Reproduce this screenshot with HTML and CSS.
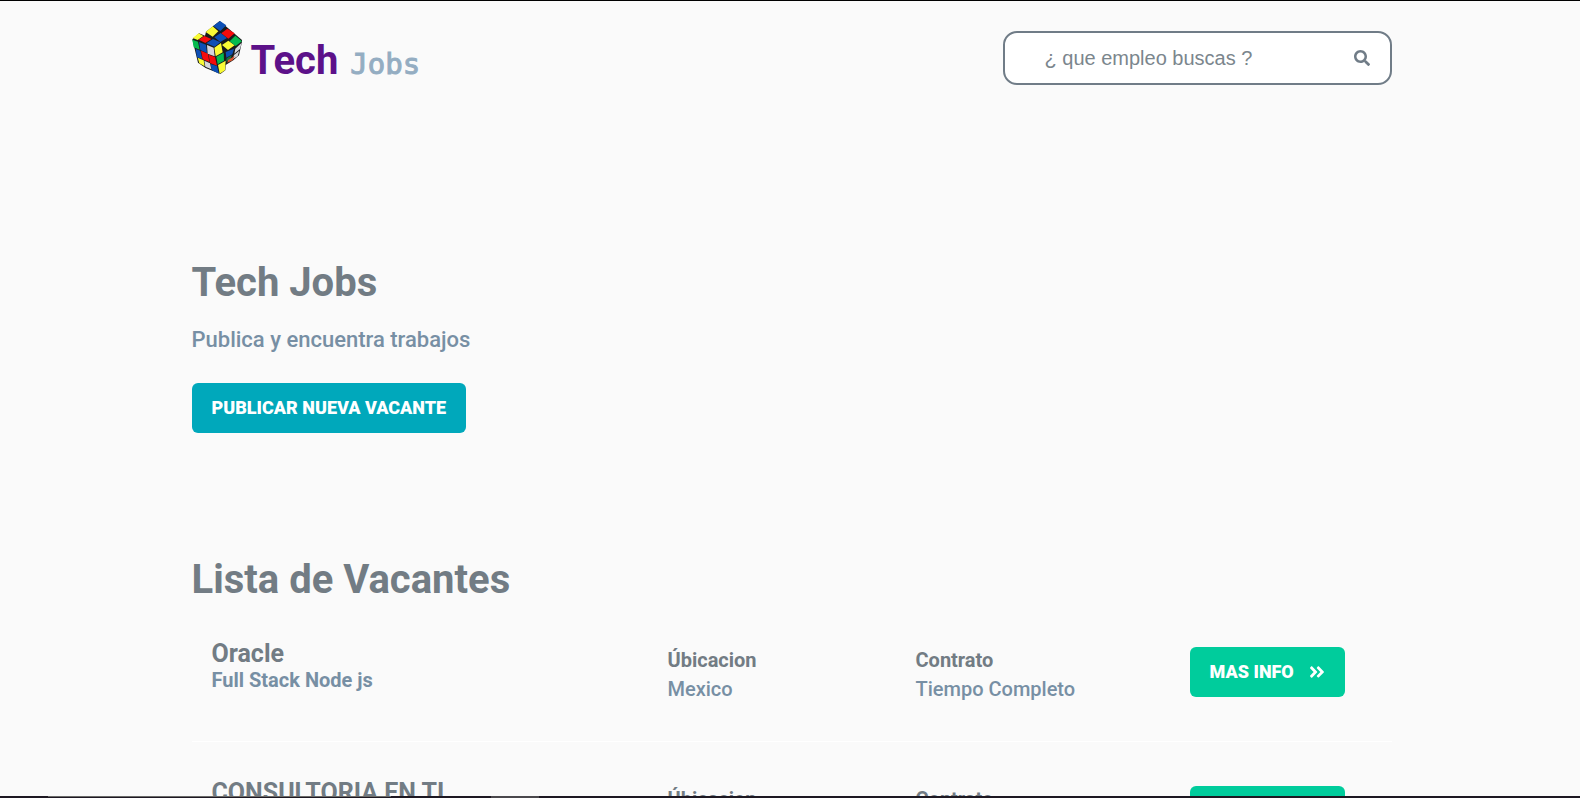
FILE: index.html
```html
<!DOCTYPE html>
<html lang="es">
<head>
<meta charset="utf-8">
<meta name="viewport" content="width=device-width, initial-scale=1">
<title>Tech Jobs</title>
<link rel="stylesheet" href="styles.css">
</head>
<body>
<header class="header container">
  <a class="logo" href="#">
    <svg class="logo-cube" viewBox="36 33 150 159" aria-hidden="true">
      <path fill="#191b1c" d="M119 33L187 91L177 136L160 151L137 165L136 181L121 192L77 174L54 158L37 88L57 70L75 77L78 65Z"/>
      <path fill="#0d4fb5" d="M120 33L139 46L121 63L100 48ZM122 69L141 84L121 96L103 82ZM79 100L99 87L121 97L104 110ZM57 96L78 104L81 129L61 120ZM47 117L61 122L67 147L51 142ZM92 162L111 168L117 191L95 180ZM137 126L162 116L157 133L139 143Z"/>
      <path fill="#f9fb35" d="M98 49L115 64L98 80L77 66ZM145 92L164 106L144 120L126 105ZM38 84L56 70L70 78L53 90ZM103 113L123 99L128 127L107 139ZM114 165L137 152L135 181L119 191ZM53 143L71 151L74 169L58 160Z"/>
      <path fill="#f50b0c" d="M142 56L164 70L145 86L124 70ZM56 89L73 78L94 87L76 99ZM63 122L84 131L88 156L68 148ZM86 134L105 141L111 167L90 159Z"/>
      <path fill="#05bb4e" d="M166 77L186 94L167 108L149 94ZM37 89L54 95L59 119L41 112ZM109 140L131 128L132 152L113 163Z"/>
      <path fill="#d5d6dc" d="M81 105L101 113L104 139L83 131ZM73 152L90 160L94 178L76 170ZM166 116L185 98L180 117L163 131ZM162 135L178 122L173 139L158 148Z"/>
      <path fill="#167344" d="M140 145L155 136L152 146L138 155Z"/>
      <path fill="#dc542e" d="M144 150L164 138L158 151L142 158Z"/>
    </svg>
    <span class="logo-name">Tech</span>
    <span class="logo-sub">Jobs</span>
  </a>
  <form class="search" role="search">
    <input class="search-input" type="text" placeholder="¿ que empleo buscas ?" aria-label="¿ que empleo buscas ?">
    <button class="search-button" type="button" aria-label="Buscar">
      <svg class="icon" viewBox="0 0 512 512" aria-hidden="true"><path fill="currentColor" d="M505 442.700L405.300 343c-4.500-4.500-10.600-7-17-7H372c27.600-35.300 44-79.700 44-128C416 93.100 322.900 0 208 0S0 93.100 0 208s93.100 208 208 208c48.300 0 92.700-16.400 128-44v16.300c0 6.400 2.500 12.500 7 17l99.700 99.700c9.400 9.400 24.600 9.400 33.900 0l28.300-28.300c9.400-9.400 9.400-24.600.1-34zM208 336c-70.700 0-128-57.200-128-128 0-70.700 57.200-128 128-128 70.700 0 128 57.200 128 128 0 70.700-57.200 128-128 128z"/></svg>
    </button>
  </form>
</header>
<main class="container">
  <section class="hero">
    <h1 class="title">Tech Jobs</h1>
    <p class="tagline">Publica y encuentra trabajos</p>
    <a class="button button-blue" href="#">Publicar nueva vacante</a>
  </section>
  <section>
    <h2 class="title">Lista de Vacantes</h2>
    <ul class="jobs">
      <li class="job">
        <div>
          <h3 class="company">Oracle</h3>
          <p class="position">Full Stack Node js</p>
        </div>
        <div class="detail">
          <p class="label">Úbicacion</p>
          <p class="value">Mexico</p>
        </div>
        <div class="detail">
          <p class="label">Contrato</p>
          <p class="value">Tiempo Completo</p>
        </div>
        <a class="button button-green" href="#">Mas info
          <svg class="icon icon-more" viewBox="0 0 448 512" aria-hidden="true"><path fill="currentColor" d="M224.300 273l-136 136c-9.400 9.400-24.600 9.400-33.900 0l-22.600-22.600c-9.400-9.400-9.400-24.600 0-33.900l96.400-96.400-96.400-96.400c-9.400-9.400-9.400-24.600 0-33.900L54.300 103c9.400-9.400 24.600-9.400 33.900 0l136 136c9.500 9.400 9.500 24.600.1 34zm192-34l-136-136c-9.400-9.400-24.600-9.400-33.900 0l-22.600 22.600c-9.400 9.400-9.400 24.600 0 33.900l96.400 96.400-96.400 96.400c-9.400 9.400-9.400 24.600 0 33.900l22.600 22.600c9.400 9.400 24.600 9.400 33.900 0l136-136c9.400-9.200 9.400-24.400 0-33.800z"/></svg>
        </a>
      </li>
      <li class="job">
        <div>
          <h3 class="company">CONSULTORIA EN TI</h3>
          <p class="position">Full Stack Node js</p>
        </div>
        <div class="detail">
          <p class="label">Úbicacion</p>
          <p class="value">Mexico</p>
        </div>
        <div class="detail">
          <p class="label">Contrato</p>
          <p class="value">Tiempo Completo</p>
        </div>
        <a class="button button-green" href="#">Mas info
          <svg class="icon icon-more" viewBox="0 0 448 512" aria-hidden="true"><path fill="currentColor" d="M224.300 273l-136 136c-9.400 9.400-24.600 9.400-33.900 0l-22.600-22.600c-9.400-9.400-9.400-24.600 0-33.900l96.400-96.400-96.400-96.400c-9.400-9.400-9.400-24.600 0-33.900L54.300 103c9.400-9.400 24.600-9.400 33.900 0l136 136c9.500 9.400 9.500 24.600.1 34zm192-34l-136-136c-9.400-9.400-24.600-9.400-33.900 0l-22.600 22.600c-9.400 9.400-9.400 24.600 0 33.900l96.400 96.400-96.400 96.400c-9.400 9.400-9.400 24.600 0 33.900l22.600 22.600c9.400 9.400 24.600 9.400 33.900 0l136-136c9.400-9.200 9.400-24.400 0-33.800z"/></svg>
        </a>
      </li>
    </ul>
  </section>
</main>
<div class="bottom-edge" aria-hidden="true"></div>
</body>
</html>
```
FILE: styles.css
```css
* {
  box-sizing: border-box;
  margin: 0;
  padding: 0;
}

body {
  height: 100vh;
  padding-left: 3px;
  overflow: hidden;
  border-top: 1px solid #000;
  background: #fafafa;
  color: #727c84;
  font-family: Roboto, "Liberation Sans", sans-serif;
  font-size: 20px;
  line-height: 24px;
}

a {
  color: inherit;
  text-decoration: none;
}

.container {
  width: calc(100% - 40px);
  max-width: 1200px;
  margin: 0 auto;
}

.header {
  display: flex;
  justify-content: space-between;
  align-items: flex-start;
  padding-top: 20px;
}

.logo {
  display: flex;
  align-items: baseline;
}

.logo-cube {
  width: 50px;
  height: 53px;
  margin-right: 9px;
}

.logo-name {
  margin-right: 12px;
  color: #5c1189;
  font-size: 40px;
  font-weight: 700;
}

.logo-sub {
  color: #94adc2;
  font-family: "DejaVu Sans Mono", monospace;
  font-size: 29px;
  -webkit-text-stroke: 1px #94adc2;
}

.search {
  display: flex;
  align-items: center;
  width: 389px;
  height: 54px;
  margin-top: 10px;
  padding: 0 20px 0 40px;
  border: 2px solid #707c87;
  border-radius: 14px;
  background: #fff;
}

.search-input {
  flex: 1;
  min-width: 0;
  border: 0;
  outline: 0;
  background: transparent;
  color: #727c84;
  font-family: "Liberation Sans", Arial, sans-serif;
  font-size: 20px;
}

.search-input::placeholder {
  color: #7b868d;
  opacity: 1;
}

.search-button {
  display: flex;
  border: 0;
  background: transparent;
  color: #707c87;
}

.icon {
  width: 16px;
  height: 16px;
}

.icon-more {
  height: 18px;
}

.hero {
  padding: 172px 0 121px;
}

.title {
  font-size: 40px;
  font-weight: 700;
  line-height: 52px;
}

.tagline {
  margin: 18px 0 30px;
  color: #778fa4;
  font-size: 22px;
  font-weight: 500;
  line-height: 26px;
}

.button {
  display: inline-flex;
  align-items: center;
  justify-self: start;
  gap: 15px;
  height: 50px;
  padding: 0 20px;
  border-radius: 6px;
  color: #fff;
  font-size: 18px;
  font-weight: 900;
  text-transform: uppercase;
  white-space: nowrap;
}

.button-blue {
  background: #00a8bb;
}

.button-green {
  background: #00cc9c;
}

.jobs {
  margin-top: -3px;
  list-style: none;
}

.job {
  display: grid;
  grid-template-columns: 456fr 248fr 274fr 182fr;
  align-items: center;
  height: 139px;
  padding: 0 20px;
  border-bottom: 1px solid #fff;
}

.company {
  font-size: 25px;
  font-weight: 700;
  line-height: 28px;
}

.position {
  margin-bottom: 12px;
  color: #778fa4;
  font-weight: 700;
}

.detail {
  padding-top: 4px;
}

.label {
  font-weight: 700;
}

.value {
  margin-top: 5px;
  color: #778fa4;
  font-weight: 500;
}

.bottom-edge {
  position: fixed;
  right: 0;
  bottom: 0;
  left: 0;
  height: 2px;
  background:
    linear-gradient(#4a484c, #4a484c) 491px 0 / 48px 2px no-repeat,
    linear-gradient(#6b6b69, #6b6b69) 48px 0 / 343px 1px no-repeat,
    #1d1822;
}
```
